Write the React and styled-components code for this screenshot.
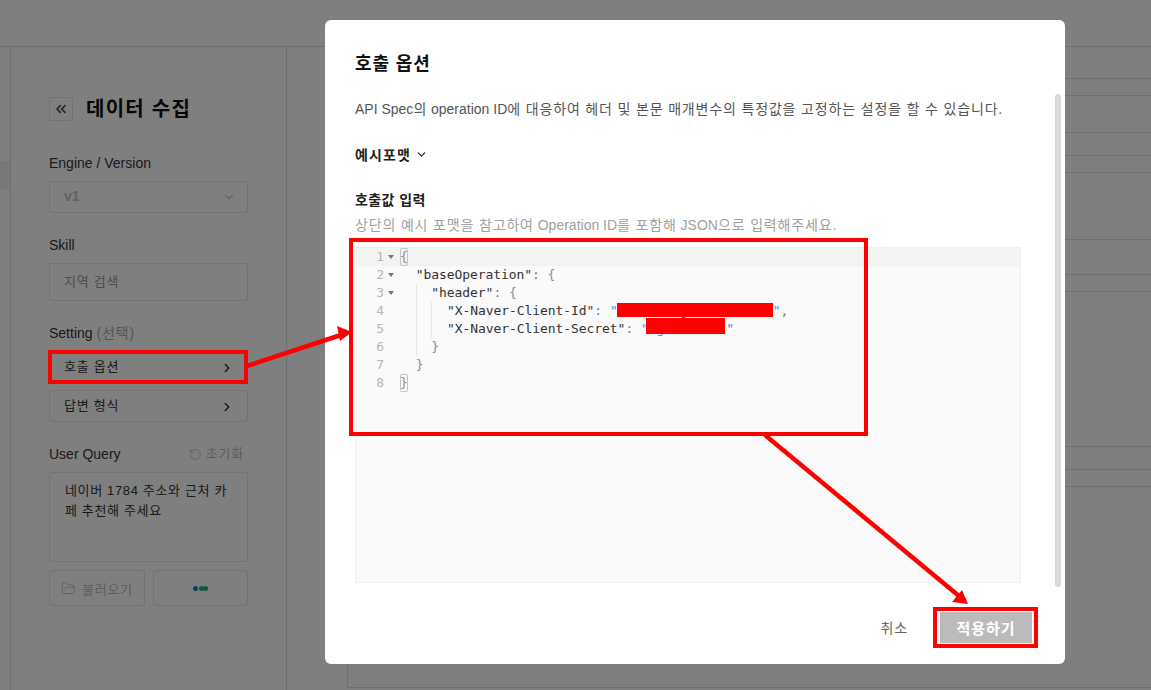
import React from "react";
import styled, { createGlobalStyle } from "styled-components";
import { ChevronsLeft, ChevronDown, ChevronRight, RotateCcw, FolderOpen } from "lucide-react";

const Global = createGlobalStyle`
  html, body { margin: 0; padding: 0; height: 690px; overflow: hidden; background: #fff; }
  * { box-sizing: border-box; }
  body { font-family: "Liberation Sans", "Noto Sans CJK KR", sans-serif; color: #222; }
`;

const Ko = styled.span`
  letter-spacing: 0.06em;
`;
const Page = styled.div`
  width: 1151px;
  height: 690px;
  display: flex;
  flex-direction: column;
  overflow: hidden;
`;
const TopBar = styled.header`
  height: 47px;
  flex: none;
  border-bottom: 1px solid #dedede;
`;
const Workspace = styled.div`
  flex: 1;
  display: flex;
  min-height: 0;
`;
const Rail = styled.nav`
  width: 11px;
  flex: none;
  padding-top: 114px;
  border-right: 1px solid #dedede;
`;
const RailItem = styled.div`
  height: 29px;
  background: #f0f0f0;
`;
const Panel = styled.aside`
  width: 276px;
  flex: none;
  padding: 50px 38px 0;
  border-right: 1px solid #dedede;
`;
const PanelHead = styled.div`
  display: flex;
  align-items: center;
  gap: 13px;
  height: 24px;
  margin-bottom: 33px;
`;
const BackButton = styled.div`
  width: 24px;
  height: 24px;
  display: flex;
  align-items: center;
  justify-content: center;
  border: 1px solid #e4e4e4;
  border-radius: 2px;
  color: #444;
`;
const PanelTitle = styled.h1`
  margin: 0;
  font-size: 20px;
  line-height: 24px;
  font-weight: 700;
  letter-spacing: 0.063em;
  color: #111;
`;
const Label = styled.div`
  display: flex;
  align-items: center;
  justify-content: ${(p) => (p.$between ? "space-between" : "flex-start")};
  gap: 4px;
  height: 18px;
  margin-bottom: 9px;
  font-size: 14px;
  line-height: 18px;
  color: #333;
`;
const Optional = styled.span`
  color: #aaa;
  letter-spacing: 0.06em;
`;
const Reset = styled.span`
  display: flex;
  align-items: center;
  gap: 4px;
  padding-right: 4px;
  font-size: 13px;
  letter-spacing: 0.06em;
  color: #bbb;
`;
const Field = styled.div`
  display: flex;
  align-items: center;
  justify-content: space-between;
  height: ${(p) => p.$h}px;
  margin-bottom: ${(p) => p.$mb}px;
  padding: 0 ${(p) => p.$pr || 13}px 3px 14px;
  border: 1px solid #e6e6e6;
  border-radius: 2px;
  font-size: ${(p) => (p.$strong ? 14 : 13)}px;
  font-weight: ${(p) => (p.$strong ? 700 : 400)};
  letter-spacing: ${(p) => (p.$strong ? 0 : "0.06em")};
  color: ${(p) => p.$color || "#333"};
`;
const Arrow = styled(ChevronRight)`
  margin-top: 4px;
`;
const Caret = styled(ChevronDown)`
  margin-top: 3px;
`;
const QueryBox = styled.div`
  height: 90px;
  margin-bottom: 8px;
  padding: 8px 15px;
  border: 1px solid #e6e6e6;
  border-radius: 2px;
  font-size: 13px;
  line-height: 20px;
  letter-spacing: 0.05em;
  color: #333;
  word-break: break-all;
`;
const ActionRow = styled.div`
  display: flex;
  gap: 8px;
`;
const ActionButton = styled.div`
  width: ${(p) => p.$w}px;
  height: 36px;
  display: flex;
  align-items: center;
  justify-content: center;
  gap: 6px;
  border: 1px solid #e6e6e6;
  border-radius: 2px;
  font-size: 13px;
  letter-spacing: 0.06em;
  color: #bbb;
`;
const Dots = styled.span`
  display: flex;
  align-items: center;
`;
const Dot = styled.i`
  width: 5px;
  height: 5px;
  margin-left: ${(p) => p.$ml}px;
  border-radius: 50%;
  background: ${(p) => p.$c};
`;
const Main = styled.main`
  flex: 1;
  padding-left: 60px;
`;
const Table = styled.div`
  height: 641px;
  border-left: 1px solid #dedede;
`;
const TableRow = styled.div`
  height: ${(p) => p.$h}px;
  border-bottom: 1px solid #dedede;
`;

const Dim = styled.div`
  position: fixed;
  inset: 0;
  background: rgba(0, 0, 0, 0.5);
`;
const Modal = styled.section`
  position: absolute;
  left: 325px;
  top: 20px;
  width: 740px;
  height: 644px;
  display: flex;
  flex-direction: column;
  padding: 32px 30px 0;
  background: #fff;
  border-radius: 6px;
`;
const Scrollbar = styled.div`
  position: absolute;
  left: 730px;
  top: 74px;
  width: 6px;
  height: 493px;
  border-radius: 3px;
  background: #d9d9d9;
`;
const ModalTitle = styled.h2`
  margin: 0 0 23px;
  height: 24px;
  font-size: 18px;
  line-height: 24px;
  font-weight: 700;
  letter-spacing: 0.05em;
  color: #111;
`;
const Description = styled.p`
  margin: 0 0 25px;
  height: 20px;
  font-size: 14px;
  line-height: 20px;
  white-space: nowrap;
  color: #555;
`;
const Example = styled.div`
  display: flex;
  align-items: center;
  gap: 4px;
  height: 20px;
  margin-bottom: 26px;
  font-size: 14px;
  font-weight: 700;
  letter-spacing: 0.08em;
  color: #222;
`;
const InputLabel = styled.div`
  height: 20px;
  margin-bottom: 5px;
  font-size: 14px;
  line-height: 20px;
  font-weight: 700;
  letter-spacing: 0.03em;
  color: #222;
`;
const Helper = styled.div`
  height: 20px;
  margin-bottom: 12px;
  font-size: 14px;
  line-height: 20px;
  white-space: nowrap;
  color: #a0a0a0;
`;
const Editor = styled.div`
  width: 666px;
  height: 336px;
  flex: none;
  background: #fafafa;
  border: 1px solid #f0f0f0;
  font-family: "DejaVu Sans Mono", monospace;
  font-size: 13px;
  line-height: 18px;
  letter-spacing: -0.07px;
`;
const CodeLine = styled.div`
  display: flex;
  height: 18px;
  background: ${(p) => (p.$active ? "#f3f3f3" : "transparent")};
  white-space: pre;
`;
const LineNo = styled.span`
  width: 28px;
  text-align: right;
  color: #b5b5b5;
`;
const Fold = styled.span`
  width: 16px;
  flex: none;
  display: flex;
  align-items: center;
  justify-content: center;
  &::after {
    content: "";
    display: ${(p) => (p.$on ? "block" : "none")};
    margin-left: -2px;
    border-left: 3px solid transparent;
    border-right: 3px solid transparent;
    border-top: 4px solid #777;
  }
`;
const Indent = styled.span`
  display: inline-block;
  width: 15.66px;
  height: 18px;
  flex: none;
  border-left: ${(p) => (p.$guide ? "1px solid #e6e6e6" : "0")};
`;
const Key = styled.span`
  color: #333;
`;
const Punct = styled.span`
  color: #777;
`;
const Str = styled.span`
  color: #4a90e2;
`;
const Brace = styled.span`
  color: #8a8f98;
`;
const MatchBrace = styled(Brace)`
  display: inline-block;
  height: 18px;
  border-radius: 2px;
  box-shadow: inset 0 0 0 1px #c4c4c4;
`;
const Footer = styled.footer`
  display: flex;
  align-items: center;
  justify-content: flex-end;
  gap: 32px;
  margin-top: 29px;
  padding-right: 3px;
`;
const Cancel = styled.span`
  margin-bottom: 2px;
  font-size: 14px;
  letter-spacing: 0.06em;
  color: #666;
`;
const Apply = styled.div`
  width: 92px;
  height: 31px;
  display: flex;
  align-items: center;
  justify-content: center;
  background: #bbb;
  font-size: 15px;
  font-weight: 700;
  letter-spacing: 0.06em;
  color: #fff;
`;
const Annotations = styled.svg`
  position: fixed;
  inset: 0;
  width: 1151px;
  height: 690px;
  pointer-events: none;
`;

const rows = [32, 17, 37, 23, 17, 67, 35, 17, 155, 23, 17, 201];

const code = [
  { depth: 0, fold: true, active: true, body: <MatchBrace>{"{"}</MatchBrace> },
  { depth: 1, fold: true, body: <><Key>"baseOperation"</Key><Punct>: </Punct><Brace>{"{"}</Brace></> },
  { depth: 2, fold: true, body: <><Key>"header"</Key><Punct>: </Punct><Brace>{"{"}</Brace></> },
  { depth: 3, body: <><Key>"X-Naver-Client-Id"</Key><Punct>: </Punct><Str>"xxxxxxxxgxxxxxxxxxxi"</Str><Punct>,</Punct></> },
  { depth: 3, body: <><Key>"X-Naver-Client-Secret"</Key><Punct>: </Punct><Str>"xgxxxxxxxi"</Str></> },
  { depth: 2, body: <Brace>{"}"}</Brace> },
  { depth: 1, body: <Brace>{"}"}</Brace> },
  { depth: 0, body: <MatchBrace>{"}"}</MatchBrace> },
];

export default function App() {
  return (
    <>
      <Global />
      <Page>
        <TopBar />
        <Workspace>
          <Rail><RailItem /></Rail>
          <Panel>
            <PanelHead>
              <BackButton><ChevronsLeft size={16} strokeWidth={2.4} /></BackButton>
              <PanelTitle>데이터 수집</PanelTitle>
            </PanelHead>
            <Label>Engine / Version</Label>
            <Field $h={32} $mb={23} $strong $pr={11} $color="#c4c4c4">
              v1
              <Caret size={14} color="#c4c4c4" />
            </Field>
            <Label>Skill</Label>
            <Field $h={38} $mb={23} $color="#999">지역 검색</Field>
            <Label>Setting <Optional>(선택)</Optional></Label>
            <Field $h={32} $mb={7}>
              호출 옵션
              <Arrow size={14} color="#222" strokeWidth={2.2} />
            </Field>
            <Field $h={32} $mb={23}>
              답변 형식
              <Arrow size={14} color="#222" strokeWidth={2.2} />
            </Field>
            <Label $between>
              User Query
              <Reset><RotateCcw size={13} strokeWidth={1.5} />초기화</Reset>
            </Label>
            <QueryBox>네이버 1784 주소와 근처 카페 추천해 주세요</QueryBox>
            <ActionRow>
              <ActionButton $w={96}><FolderOpen size={15} strokeWidth={1.4} />불러오기</ActionButton>
              <ActionButton $w={95}>
                <Dots>
                  <Dot $c="#1f7fc4" $ml={0} />
                  <Dot $c="#19b06c" $ml={1} />
                  <Dot $c="#19b06c" $ml={-1} />
                </Dots>
              </ActionButton>
            </ActionRow>
          </Panel>
          <Main>
            <Table>
              {rows.map((h, i) => <TableRow key={i} $h={h} />)}
            </Table>
          </Main>
        </Workspace>
      </Page>
      <Dim />
      <Modal>
        <ModalTitle>호출 옵션</ModalTitle>
        <Description>API Spec<Ko>의</Ko> operation ID<Ko>에 대응하여 헤더 및 본문 매개변수의 특정값을 고정하는 설정을 할 수 있습니다.</Ko></Description>
        <Example>예시포맷 <ChevronDown size={13} strokeWidth={2} /></Example>
        <InputLabel>호출값 입력</InputLabel>
        <Helper><Ko>상단의 예시 포맷을 참고하여</Ko> Operation ID<Ko>를 포함해</Ko> JSON<Ko>으로 입력해주세요.</Ko></Helper>
        <Editor>
          {code.map((line, i) => (
            <CodeLine key={i} $active={line.active}>
              <LineNo>{i + 1}</LineNo>
              <Fold $on={line.fold} />
              {Array.from({ length: line.depth }, (_, d) => <Indent key={d} $guide={d > 0} />)}
              <span>{line.body}</span>
            </CodeLine>
          ))}
        </Editor>
        <Footer>
          <Cancel>취소</Cancel>
          <Apply>적용하기</Apply>
        </Footer>
        <Scrollbar />
      </Modal>
      <Annotations viewBox="0 0 1151 690">
        <g fill="#ff0000">
          <rect x="617" y="303" width="156" height="14" />
          <rect x="646" y="318" width="79" height="16" />
        </g>
        <g fill="none" stroke="#ff0000" strokeWidth="4">
          <rect x="50" y="352" width="196" height="30" />
          <rect x="351" y="240" width="515" height="194" />
          <rect x="935" y="609" width="101" height="37" />
        </g>
        <g stroke="#ff0000" strokeWidth="4.5">
          <line x1="247" y1="366" x2="347" y2="333" />
          <line x1="765" y1="435" x2="965" y2="601" />
        </g>
        <g fill="#ff0000">
          <polygon points="352,332 337,326 340,341" />
          <polygon points="968,604 962,590 952,602" />
        </g>
      </Annotations>
    </>
  );
}
